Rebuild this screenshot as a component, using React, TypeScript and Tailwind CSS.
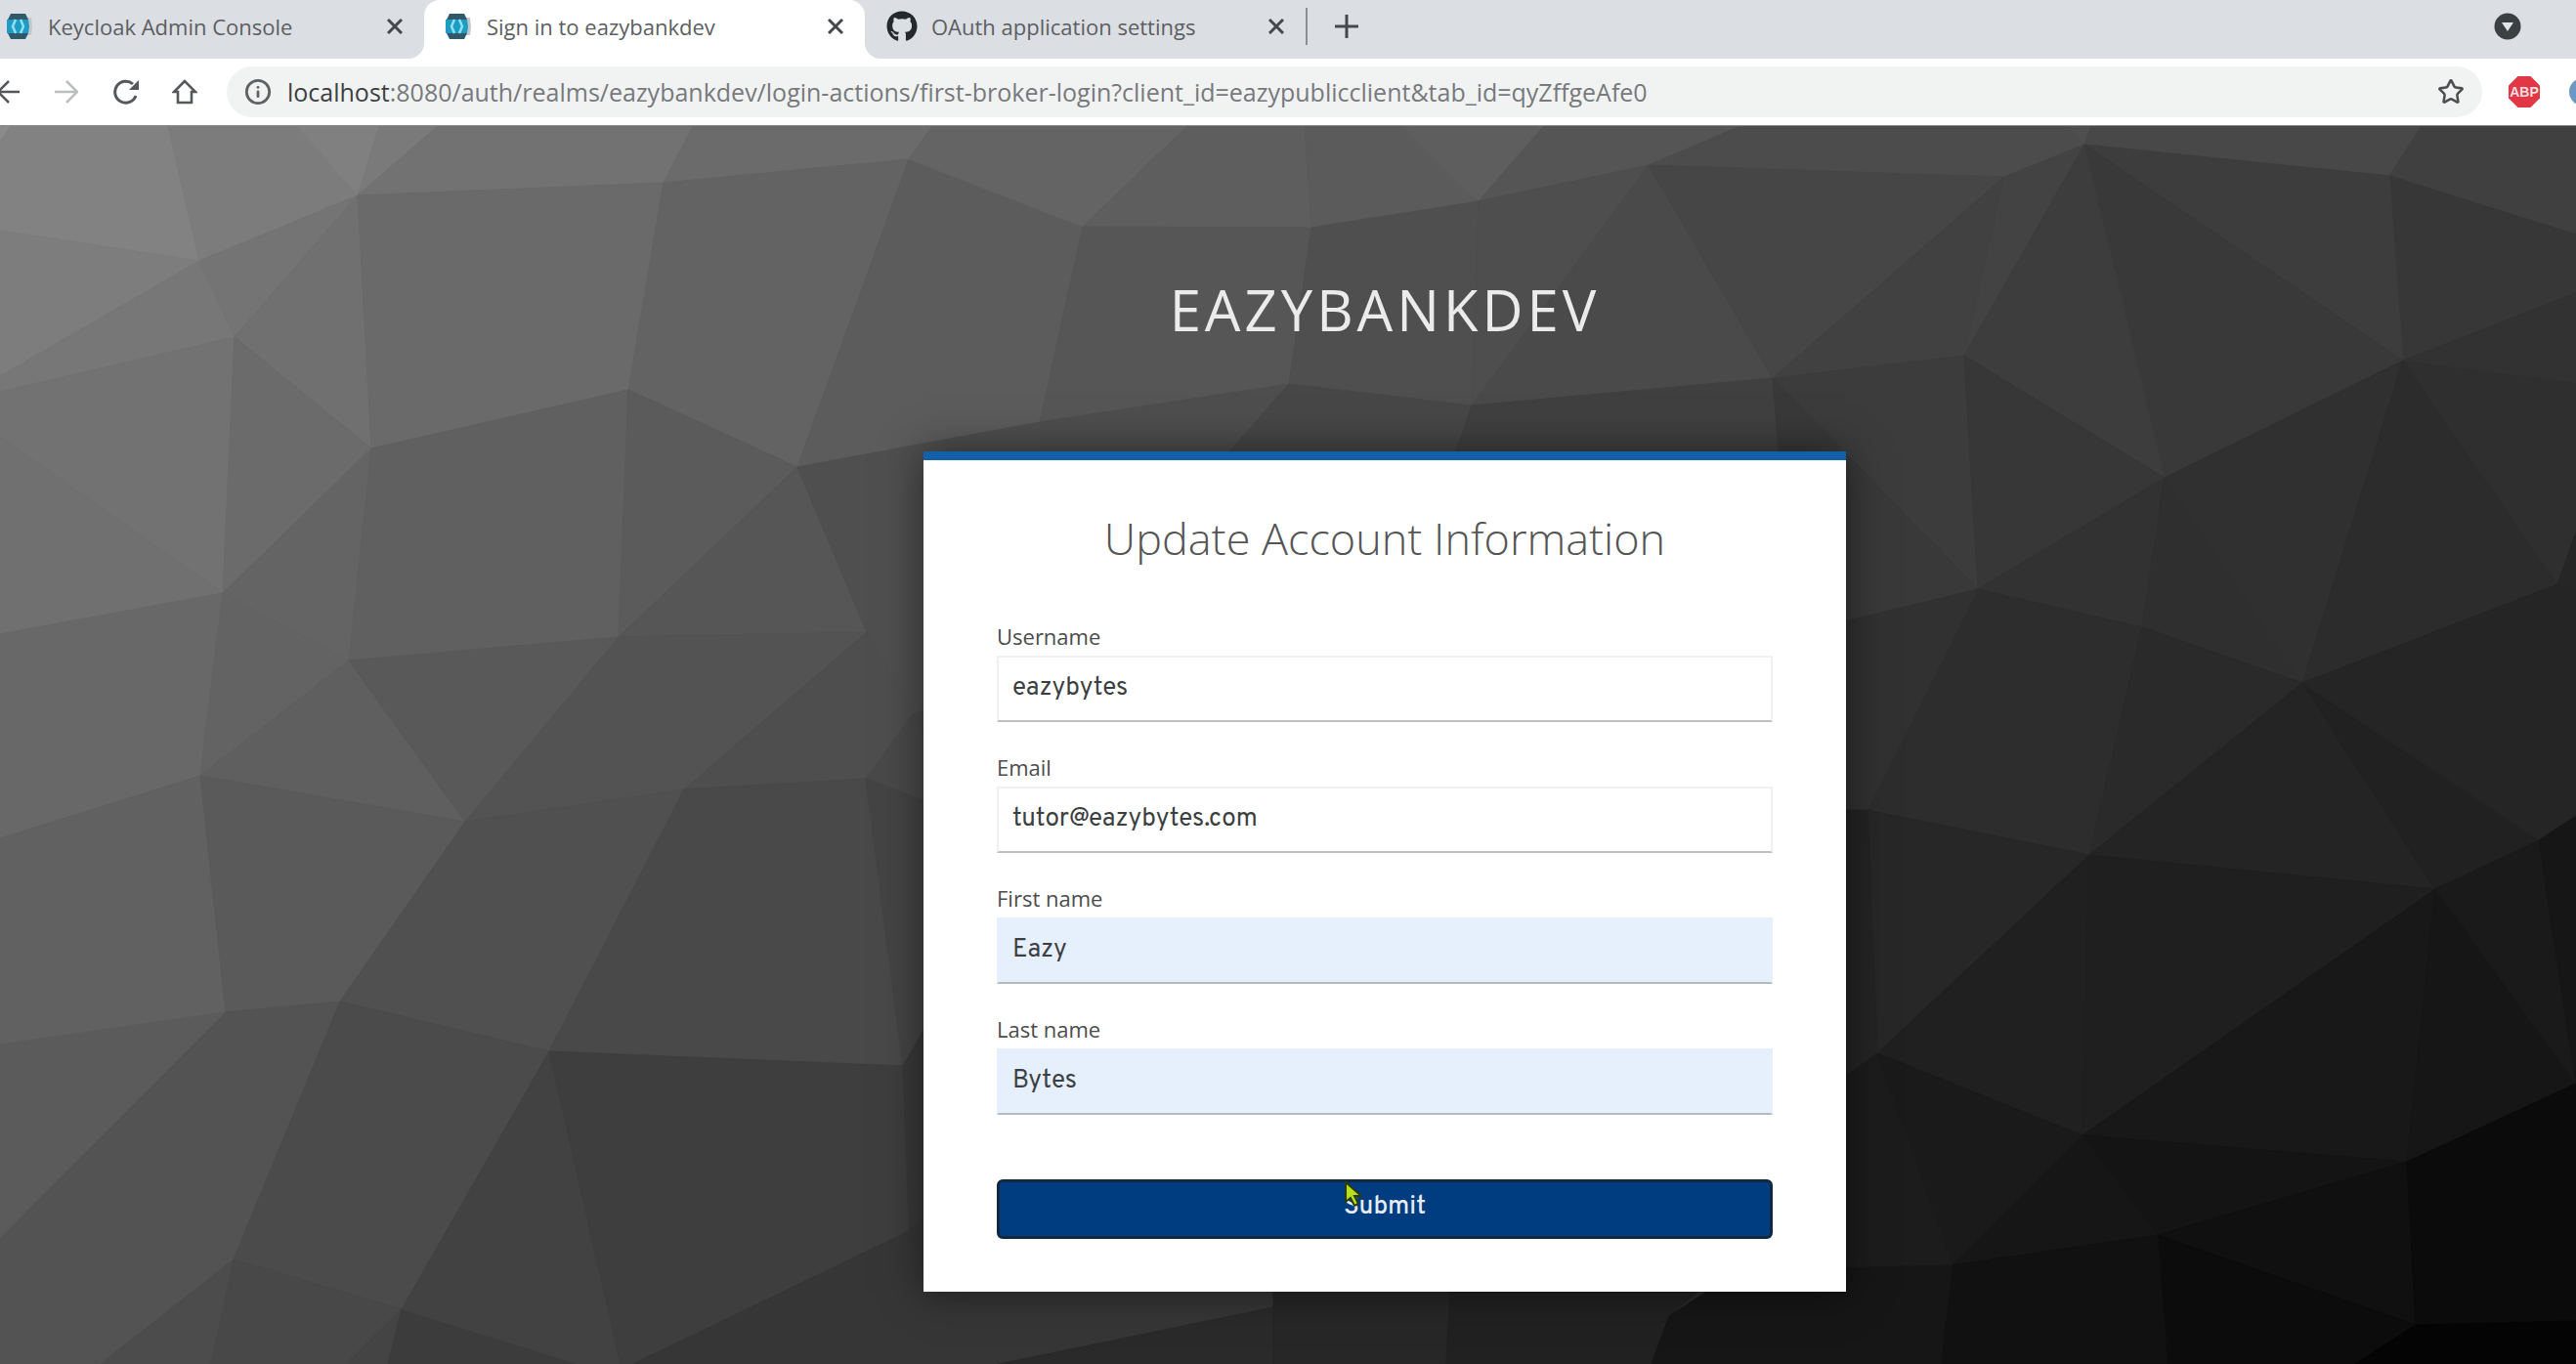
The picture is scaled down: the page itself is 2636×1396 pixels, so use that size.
import { Info, Star } from "lucide-react";
import { FaGithub } from "react-icons/fa";

type Facet = [points: string, fill: string];

const facets: Facet[] = [
  ["0,129 11,129 0,145", "#8a8a8a"],
  ["0,145 11,129 172,129 204,267 0,236", "#828282"],
  ["172,129 304,129 366,200 204,267", "#7c7c7c"],
  ["304,129 388,129 366,200", "#808080"],
  ["388,129 448,129 366,200", "#7a7a7a"],
  ["448,129 709,129 679,187 366,200", "#727272"],
  ["709,129 954,129 930,163 679,187", "#6b6b6b"],
  ["0,236 204,267 0,385", "#7d7d7d"],
  ["204,267 240,345 0,401 0,385", "#777777"],
  ["204,267 366,200 240,345", "#747474"],
  ["366,200 380,459 240,345", "#707070"],
  ["366,200 679,187 643,399 380,459", "#6a6a6a"],
  ["679,187 930,163 816,478 643,399", "#636363"],
  ["240,345 228,607 0,447 0,401", "#727272"],
  ["228,607 0,649 0,447", "#707070"],
  ["240,345 380,459 228,607", "#6b6b6b"],
  ["380,459 357,676 228,607", "#646464"],
  ["380,459 643,399 633,652 357,676", "#606060"],
  ["643,399 816,478 633,652", "#5b5b5b"],
  ["816,478 887,647 633,652", "#565656"],
  ["930,163 1108,232 1064,432 816,478", "#5c5c5c"],
  ["816,478 1064,432 1100,700 935,730 887,647", "#4f4f4f"],
  ["935,730 1100,700 1000,840", "#494949"],
  ["228,607 205,794 0,858 0,649", "#686868"],
  ["228,607 357,676 205,794", "#636363"],
  ["357,676 476,841 205,794", "#5f5f5f"],
  ["357,676 633,652 476,841", "#595959"],
  ["633,652 887,647 700,808 476,841", "#535353"],
  ["887,647 935,730 886,797 700,808", "#4e4e4e"],
  ["935,730 1000,840 886,797", "#494949"],
  ["205,794 231,1036 0,1069 0,858", "#616161"],
  ["205,794 476,841 348,1025 231,1036", "#5a5a5a"],
  ["476,841 700,808 562,1076 348,1025", "#505050"],
  ["700,808 886,797 924,1091 562,1076", "#494949"],
  ["886,797 1000,840 1000,960 924,1091", "#444444"],
  ["231,1036 0,1268 0,1069", "#5b5b5b"],
  ["231,1036 348,1025 239,1289 103,1396 0,1396 0,1268", "#535353"],
  ["239,1289 216,1396 103,1396", "#4c4c4c"],
  ["348,1025 562,1076 411,1340 239,1289", "#4b4b4b"],
  ["239,1289 411,1340 354,1396 216,1396", "#484848"],
  ["411,1340 397,1396 354,1396", "#444444"],
  ["411,1340 591,1396 397,1396", "#3c3c3c"],
  ["562,1076 635,1396 591,1396 411,1340", "#424242"],
  ["562,1076 924,1091 930,1260 648,1396 635,1396", "#3e3e3e"],
  ["924,1091 1000,960 1000,1200 930,1260", "#393939"],
  ["930,1260 1000,1200 1303,1200 1303,1338 1022,1396 648,1396", "#363636"],
  ["1303,1338 1303,1396 1022,1396", "#2a2a2a"],
  ["1303,1200 1490,1200 1480,1396 1303,1396", "#272727"],
  ["1490,1200 1880,1200 1708,1347 1690,1396 1480,1396", "#212121"],
  ["954,129 1215,129 1108,232 930,163", "#646464"],
  ["1215,129 1335,129 1342,233 1108,232", "#5e5e5e"],
  ["1335,129 1436,129 1513,206 1342,233", "#5b5b5b"],
  ["1436,129 1580,129 1513,206", "#5e5e5e"],
  ["1580,129 1781,129 1687,169 1513,206", "#555555"],
  ["1781,129 2116,129 2133,148 2051,181 1687,169", "#4c4c4c"],
  ["2116,129 2140,129 2133,148", "#4f4f4f"],
  ["1108,232 1342,233 1319,393 1064,432", "#565656"],
  ["1342,233 1513,206 1506,415 1319,393", "#4f4f4f"],
  ["1513,206 1687,169 1506,415", "#4e4e4e"],
  ["1687,169 1814,387 1506,415", "#4a4a4a"],
  ["1687,169 2051,181 1814,387", "#464646"],
  ["2051,181 2010,364 1814,387", "#414141"],
  ["2051,181 2133,148 2010,364", "#434343"],
  ["1064,432 1319,393 1190,540 1064,540", "#4e4e4e"],
  ["1319,393 1506,415 1470,520 1190,540", "#474747"],
  ["1506,415 1814,387 1825,520 1470,520", "#404040"],
  ["1814,387 2010,364 2024,603", "#3c3c3c"],
  ["1814,387 2024,603 1880,640 1825,520", "#393939"],
  ["2140,129 2478,129 2445,180 2133,148", "#484848"],
  ["2478,129 2636,129 2636,240 2445,180", "#404040"],
  ["2445,180 2636,240 2636,300 2459,369", "#373737"],
  ["2133,148 2445,180 2459,369", "#3d3d3d"],
  ["2133,148 2459,369 2215,489", "#393939"],
  ["2133,148 2215,489 2010,364", "#3d3d3d"],
  ["2010,364 2215,489 2024,603", "#373737"],
  ["2215,489 2192,642 2024,603", "#323232"],
  ["2215,489 2356,699 2192,642", "#2f2f2f"],
  ["2215,489 2459,369 2356,699", "#303030"],
  ["2459,369 2617,598 2356,699", "#2c2c2c"],
  ["2459,369 2636,392 2636,545 2617,598", "#2f2f2f"],
  ["2459,369 2636,300 2636,392", "#323232"],
  ["2617,598 2636,545 2636,605", "#262626"],
  ["2024,603 2192,642 2138,875 1911,829", "#2d2d2d"],
  ["2024,603 1911,829 1870,829 1870,640", "#313131"],
  ["2192,642 2356,699 2138,875", "#2a2a2a"],
  ["2356,699 2492,910 2138,875", "#242424"],
  ["2356,699 2598,860 2492,910", "#212121"],
  ["2356,699 2617,598 2636,605 2636,835 2598,860", "#252525"],
  ["1911,829 2138,875 1921,1078", "#272727"],
  ["1911,829 1921,1078 1870,1115 1870,829", "#242424"],
  ["2138,875 2131,1162 1921,1078", "#202020"],
  ["2138,875 2492,910 2131,1162", "#1f1f1f"],
  ["2492,910 2463,1189 2131,1162", "#181818"],
  ["2492,910 2636,1109 2463,1189", "#161616"],
  ["2492,910 2598,860 2636,1109", "#1a1a1a"],
  ["2598,860 2636,835 2636,1109", "#161616"],
  ["1921,1078 2131,1162 1998,1295", "#1a1a1a"],
  ["1921,1078 1998,1295 1870,1317 1870,1115", "#1c1c1c"],
  ["2131,1162 2208,1264 1998,1295", "#161616"],
  ["2131,1162 2463,1189 2208,1264", "#141414"],
  ["2208,1264 2463,1189 2472,1356", "#101010"],
  ["2463,1189 2636,1109 2636,1352 2472,1356", "#0b0b0b"],
  ["2208,1264 2472,1356 2410,1396 2218,1396", "#0c0c0c"],
  ["2472,1356 2636,1352 2636,1396 2410,1396", "#040404"],
  ["2208,1264 2218,1396 1986,1396 1998,1295", "#111111"],
  ["1998,1295 1986,1396 1690,1396 1708,1347 1780,1300", "#161616"],
];

function Backdrop() {
  return (
    <svg
      aria-hidden="true"
      viewBox="0 129 2636 1267"
      preserveAspectRatio="xMidYMid slice"
      className="absolute inset-0 h-full w-full"
    >
      <rect x="0" y="129" width="2636" height="1267" fill="#2b2b2b" />
      {facets.map(([points, fill]) => (
        <polygon key={points} points={points} fill={fill} stroke={fill} strokeWidth="1" />
      ))}
    </svg>
  );
}

function KeycloakIcon() {
  return (
    <svg aria-hidden="true" viewBox="0 0 28 28" className="h-7 w-7 shrink-0">
      <path d="M20 5h5l1 9-1 9h-5z" fill="#c3c8cb" />
      <path d="M4 1h15l3 6v14l-3 6H4l-3-6V7z" fill="#2f5868" />
      <path d="M0 7h22l1 7-1 7H0l-1-7z" fill="#1f9cc4" />
      <path d="M9 7 6 14l3 7M14 7l3 7-3 7" fill="none" stroke="#8fe0f5" strokeWidth="2.5" />
    </svg>
  );
}

function CloseIcon() {
  return (
    <svg aria-hidden="true" viewBox="0 0 16 16" className="h-4 w-4">
      <path d="M1 1l14 14M15 1 1 15" stroke="#45484b" strokeWidth="3" />
    </svg>
  );
}

function Tab({ title, icon, active = false, first = false }: { title: string; icon: "keycloak" | "github"; active?: boolean; first?: boolean }) {
  return (
    <div
      className={
        "relative flex h-15 items-center pb-1.5 " +
        (first ? "w-[434px] pl-[7px] " : "w-[451px] pl-[22px] ") +
        (active ? "rounded-t-2xl bg-white" : "")
      }
    >
      {active && (
        <svg aria-hidden="true" viewBox="0 0 16 16" className="absolute bottom-0 -left-4 h-4 w-4">
          <path d="M16 0v16H0A16 16 0 0 0 16 0z" fill="#fff" />
        </svg>
      )}
      {active && (
        <svg aria-hidden="true" viewBox="0 0 16 16" className="absolute -right-4 bottom-0 h-4 w-4">
          <path d="M0 0v16h16A16 16 0 0 1 0 0z" fill="#fff" />
        </svg>
      )}
      <button type="button" className="flex grow items-center gap-[14px] text-left text-[22px] leading-7 text-[#5c5f62]">
        {icon === "keycloak" ? <KeycloakIcon /> : <FaGithub aria-hidden="true" className="h-8 w-8 shrink-0 text-[#24292e]" />}
        {title}
      </button>
      <button type="button" aria-label={"Close " + title} className="mr-[22px]">
        <CloseIcon />
      </button>
    </div>
  );
}

function BrowserBar() {
  return (
    <header className="shrink-0 border-b border-[#8a8a8a] bg-white font-['Open_Sans','Noto_Sans',sans-serif]">
      <div className="flex h-15 items-center bg-[#dbdee2]">
        <Tab title="Keycloak Admin Console" icon="keycloak" first />
        <Tab title="Sign in to eazybankdev" icon="keycloak" active />
        <Tab title="OAuth application settings" icon="github" />
        <div className="flex grow items-center pb-1.5">
          <div className="h-[38px] w-[2px] bg-[#8b8e92]" />
          <button type="button" aria-label="New tab" className="ml-7">
            <svg aria-hidden="true" viewBox="0 0 24 24" className="h-6 w-6">
              <path d="M12 0v24M0 12h24" stroke="#45484b" strokeWidth="3" />
            </svg>
          </button>
          <button type="button" aria-label="Search tabs" className="mr-[56px] ml-auto">
            <svg aria-hidden="true" viewBox="0 0 28 28" className="h-7 w-7">
              <circle cx="14" cy="14" r="13.5" fill="#3b4043" />
              <path d="M8 10h12l-6 9z" fill="#e3e5e8" />
            </svg>
          </button>
        </div>
      </div>
      <div className="flex h-[68px] items-center overflow-hidden">
        <button type="button" aria-label="Back">
          <svg aria-hidden="true" viewBox="0 0 20 24" className="h-6 w-5">
            <path d="M-3 12H20M9 1-2 12 9 23" fill="none" stroke="#55585b" strokeWidth="2.5" />
          </svg>
        </button>
        <button type="button" aria-label="Forward" className="ml-[36px]">
          <svg aria-hidden="true" viewBox="0 0 24 24" className="h-6 w-6">
            <path d="M0 12h22M12 1l11 11-11 11" fill="none" stroke="#bcbec0" strokeWidth="2.5" />
          </svg>
        </button>
        <button type="button" aria-label="Reload" className="ml-[36px]">
          <svg aria-hidden="true" viewBox="0 0 26 26" className="h-[26px] w-[26px]">
            <path d="M23 17A11 11 0 1 1 20 5" fill="none" stroke="#55585b" strokeWidth="3" />
            <path d="M26 1v10H16z" fill="#55585b" />
          </svg>
        </button>
        <button type="button" aria-label="Home" className="ml-[34px]">
          <svg aria-hidden="true" viewBox="0 0 26 26" className="h-[26px] w-[26px]">
            <path d="M13 2 2 13h4v11h14V13h4z" fill="none" stroke="#55585b" strokeWidth="2.6" />
          </svg>
        </button>
        <div className="ml-[30px] flex h-[52px] grow items-center rounded-full bg-[#f1f3f2] pr-[18px] pl-[18px]">
          <Info aria-hidden="true" className="h-7 w-7 shrink-0 text-[#5f6265]" strokeWidth={2.4} />
          <div className="ml-4 grow text-[25px] leading-9 text-[#77797c]">
            <span className="text-[#3c3f42]">localhost</span>
            :8080/auth/realms/eazybankdev/login-actions/first-broker-login?client_id=eazypublicclient&amp;tab_id=qyZffgeAfe0
          </div>
          <button type="button" aria-label="Bookmark this page">
            <Star aria-hidden="true" className="h-7 w-7 text-[#4c4f52]" strokeWidth={2.2} strokeLinejoin="miter" />
          </button>
        </div>
        <button type="button" aria-label="Adblock Plus" className="ml-[27px]">
          <svg aria-hidden="true" viewBox="0 0 32 32" className="h-8 w-8">
            <path d="M9.500 0h13L32 9.500v13L22.500 32h-13L0 22.500v-13z" fill="#e23744" />
            <text x="16" y="21" textAnchor="middle" fontSize="14" fontWeight="700" fill="#fbdfe1" fontFamily="Liberation Sans, sans-serif">ABP</text>
          </svg>
        </button>
        <button type="button" aria-label="Extension" className="ml-[29px]">
          <svg aria-hidden="true" viewBox="0 0 8 30" className="h-[30px] w-2">
            <circle cx="15" cy="15" r="14" fill="#6c98c4" />
          </svg>
        </button>
      </div>
    </header>
  );
}

function Field({ id, label, value, type = "text", filled = false }: { id: string; label: string; value: string; type?: string; filled?: boolean }) {
  return (
    <div className="flex flex-col">
      <label htmlFor={id} className="h-8 text-[22px] leading-6 text-[#4c4c4c]">
        {label}
      </label>
      <input
        id={id}
        name={id}
        type={type}
        defaultValue={value}
        className={
          "h-[68px] w-full border-2 border-[#f0f0f0] px-3.5 pb-0.5 font-[Overpass,Roboto,sans-serif] text-[26px] text-[#3c3f42] outline-none " +
          (filled ? "border-t-[#e6effb] border-r-[#e6effb] border-b-[#b4bac2] border-l-[#e6effb] bg-[#e6effc]" : "border-b-[#bfc0c2] bg-white")
        }
      />
    </div>
  );
}

function Pointer() {
  return (
    <svg aria-hidden="true" viewBox="0 0 20 30" className="absolute top-0.5 left-[356px] h-[30px] w-5">
      <path d="M1 1v20l5-4 4 8 4-2-4-8h7z" fill="#b7e01c" stroke="#2c3a10" strokeWidth="2" />
    </svg>
  );
}

export default function App() {
  return (
    <div className="flex min-h-screen flex-col overflow-hidden">
      <BrowserBar />
      <main className="relative flex grow flex-col items-center bg-[#2b2b2b] pl-[198px] font-['Open_Sans','Noto_Sans',sans-serif]">
        <Backdrop />
        <h1 className="relative mt-[150px] text-[58px] leading-[76px] font-normal tracking-[4px] text-[#ebebeb]">EAZYBANKDEV</h1>
        <section className="relative mt-[107px] w-[944px] border-t-[9px] border-[#1260a8] bg-white px-[75px] pb-[54px] shadow-[0_0_40px_rgba(0,0,0,0.5)]">
          <h2 className="mt-[50px] text-center text-[45px] leading-[60px] font-light text-[#555555]">Update Account Information</h2>
          <form className="mt-[58px] flex flex-col gap-[34px]" onSubmit={(event) => event.preventDefault()}>
            <Field id="username" label="Username" value="eazybytes" />
            <Field id="email" label="Email" type="email" value="tutor@eazybytes.com" />
            <Field id="firstName" label="First name" value="Eazy" filled />
            <Field id="lastName" label="Last name" value="Bytes" filled />
            <div className="relative mt-8">
              <button
                type="submit"
                className="h-[61px] w-full rounded-md border-[3px] border-[#12283f] bg-[#003d80] pb-1 font-[Overpass,Roboto,sans-serif] text-[26px] font-medium text-[#e6ecf3]"
              >
                Submit
              </button>
              <Pointer />
            </div>
          </form>
        </section>
      </main>
    </div>
  );
}
